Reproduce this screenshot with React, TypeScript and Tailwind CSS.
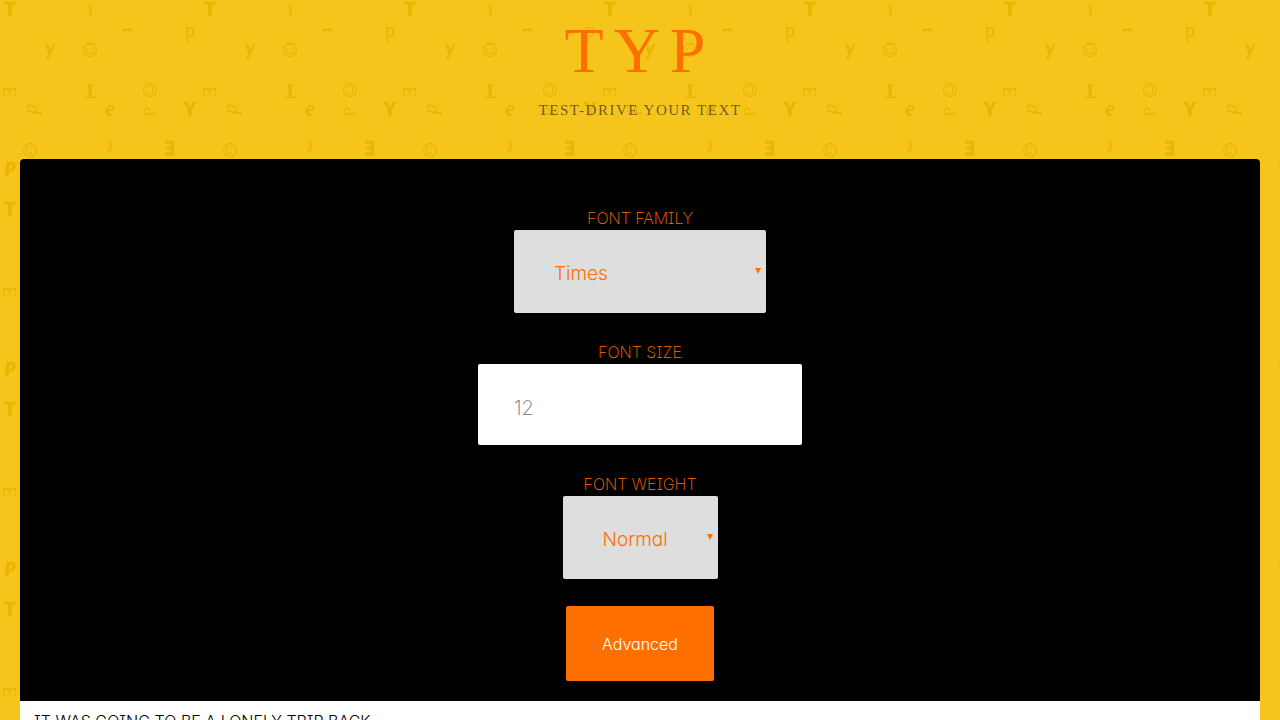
import { useState } from "react";

function Smiley({ x, y, turn = 0 }: { x: number; y: number; turn?: number }) {
  return (
    <g transform={`translate(${x} ${y}) rotate(${turn})`} fill="none" stroke="#e9b500" strokeWidth="1.3">
      <circle r="6.5" />
      <path d="M-4 1.5 Q-3.5 3 0 3 T4 1.5" strokeWidth="1.1" />
      <path d="M-4 -1.3 H-2 M2 -1.3 H4" strokeWidth="1.6" />
    </g>
  );
}

function LetterPattern() {
  return (
    <svg aria-hidden="true" className="absolute inset-0 -z-10 h-full w-full">
      <defs>
        <pattern id="letters" width="200" height="200" patternUnits="userSpaceOnUse">
          <g fill="#e9b500" textAnchor="middle" fontSize="18" fontFamily="Liberation Serif, serif">
            <g fontFamily="Lato, sans-serif" fontWeight="900" fontSize="18" stroke="#e9b500" strokeWidth="0.7">
              <text x="10" y="16">T</text>
              <text x="190" y="116">Y</text>
              <text transform="translate(170 141) rotate(180)">E</text>
              <text x="10" y="176" fontStyle="italic">P</text>
            </g>
            <text transform="translate(90 5) rotate(180)" fontSize="20">t</text>
            <text transform="translate(123 30) rotate(90)" fontWeight="700" fontSize="16">t</text>
            <text x="190" y="37" fontSize="20">p</text>
            <text x="50" y="55" fontFamily="Lato, sans-serif" fontStyle="italic" fontWeight="700" fontSize="20">y</text>
            <Smiley x={90} y={50} />
            <text transform="translate(3 92) rotate(90)">E</text>
            <text transform="translate(37 109) rotate(-90)" fontStyle="italic" fontSize="21">p</text>
            <text transform="translate(90 84) rotate(180)" fontWeight="700" fontSize="20">T</text>
            <Smiley x={150} y={90} turn={-90} />
            <text x="110" y="116" fontStyle="italic" fontWeight="700" fontSize="23">e</text>
            <text transform="translate(155 112) rotate(-90)" fontSize="15" fontFamily="DejaVu Serif, serif">P</text>
            <text transform="translate(110 141) rotate(180)" fontStyle="italic" fontSize="21">t</text>
            <Smiley x={30} y={150} turn={90} />
            <circle cx="85" cy="165" r="6" />
          </g>
        </pattern>
      </defs>
      <rect width="100%" height="100%" fill="url(#letters)" />
    </svg>
  );
}

const labelStyle = "block text-base leading-6 font-extralight uppercase text-[#ff6f00]";

interface PickerProps {
  id: string;
  label: string;
  options: string[];
  width: string;
}

function Picker({ id, label, options, width }: PickerProps) {
  const [value, setValue] = useState(options[0]);
  return (
    <div className="flex flex-col items-center">
      <label htmlFor={id} className={labelStyle}>{label}</label>
      <div className={`relative ${width}`}>
        <select
          id={id}
          value={value}
          onChange={(e) => setValue(e.target.value)}
          className="block h-[83px] w-full appearance-none rounded-xs bg-[#dedede] px-10 pt-1.5 text-[19px] font-light text-[#ff6f00]"
        >
          {options.map((o) => (
            <option key={o}>{o}</option>
          ))}
        </select>
        <svg aria-hidden="true" viewBox="0 0 6 6" className="pointer-events-none absolute top-[38px] right-[5px] size-1.5">
          <path d="M0 0H6L3 6Z" fill="#ff6f00" />
        </svg>
      </div>
    </div>
  );
}

export default function App() {
  const [size, setSize] = useState("");
  return (
    <div className="relative isolate flex min-h-screen flex-col bg-[#f5c51c] px-5 font-['Inter',sans-serif] [font-feature-settings:'cv11','cv08']">
      <LetterPattern />
      <header className="flex flex-col items-center pt-3.5 pb-[39px] text-center font-['Liberation_Serif',serif]">
        <h1 className="text-[64px] leading-[74px] tracking-[10px] text-[#ff6f00]">TYP</h1>
        <p className="mt-3 text-[15px] leading-5 tracking-widest text-[#222]/65 uppercase">Test-drive your text</p>
      </header>
      <main className="flex flex-1 flex-col">
        <form
          onSubmit={(e) => e.preventDefault()}
          className="flex flex-col items-center gap-[27px] rounded-t bg-black pt-[47px] pb-5"
        >
          <Picker id="family" label="Font family" options={["Times", "Georgia", "Helvetica", "Courier"]} width="w-[252px]" />
          <div className="flex flex-col items-center">
            <label htmlFor="size" className={labelStyle}>Font size</label>
            <input
              id="size"
              type="text"
              inputMode="numeric"
              placeholder="12"
              value={size}
              onChange={(e) => setSize(e.target.value)}
              className="block h-[81px] w-[324px] rounded-xs bg-white px-9 pt-1.5 text-[20px] font-extralight text-black placeholder:text-[#757575]"
            />
          </div>
          <Picker id="weight" label="Font weight" options={["Normal", "Bold", "Light"]} width="w-[155px]" />
          <button type="button" className="h-[75px] rounded-xs bg-[#ff6f00] px-9 text-base font-light text-white">
            Advanced
          </button>
        </form>
        <section className="flex-1 bg-white px-3.5 py-2">
          <p className="text-base leading-6 font-light text-black uppercase">
            It was going to be a lonely trip back.
          </p>
        </section>
      </main>
    </div>
  );
}
